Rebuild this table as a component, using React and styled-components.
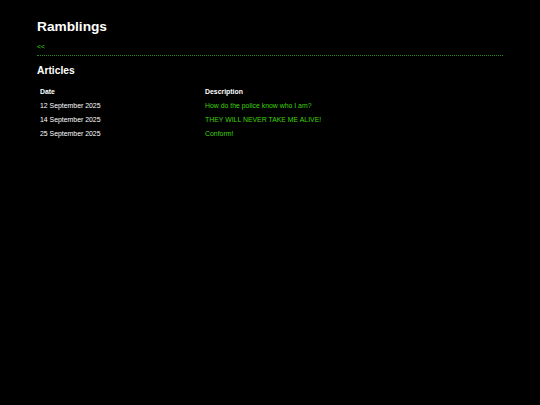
import React from 'react';
import styled, { createGlobalStyle } from 'styled-components';

const GlobalStyle = createGlobalStyle`
  html, body {
    margin: 0;
    background-color: #000000;
  }
  body {
    font-family: "Liberation Sans", Arial, sans-serif;
    color: #ffffff;
  }
`;

const Page = styled.div`
  padding: 18px 37px 0 37px;
`;

const Title = styled.h1`
  margin: 0;
  font-size: 13.7px;
  font-weight: 700;
  line-height: 18px;
`;

const BackLink = styled.a`
  display: block;
  margin-top: 7px;
  color: #3fd40a;
  font-size: 6.8px;
  line-height: 8px;
  text-decoration: none;
`;

const Rule = styled.hr`
  margin: 4px 0 0 0;
  border: none;
  border-top: 1px dotted #238a1c;
`;

const Heading = styled.h2`
  margin: 8px 0 0 0;
  font-size: 10.3px;
  font-weight: 700;
  line-height: 14px;
`;

const Table = styled.table`
  width: 100%;
  margin-top: 6px;
  border-collapse: collapse;
  font-size: 6.9px;
`;

const HeadCell = styled.th`
  width: ${(p) => p.$width || 'auto'};
  padding: 0 3px;
  height: 14px;
  text-align: left;
  font-weight: 700;
`;

const Cell = styled.td`
  padding: 0 3px;
  height: 14px;
  color: ${(p) => (p.$link ? '#3fd40a' : '#ffffff')};
`;

const articles = [
  { date: '12 September 2025', title: 'How do the police know who I am?' },
  { date: '14 September 2025', title: 'THEY WILL NEVER TAKE ME ALIVE!' },
  { date: '25 September 2025', title: 'Conform!' },
];

const App = () => {
  return (
    <>
      <GlobalStyle />
      <Page>
        <Title>Ramblings</Title>
        <BackLink href="#">&lt;&lt;</BackLink>
        <Rule />
        <Heading>Articles</Heading>
        <Table>
          <thead>
            <tr>
              <HeadCell $width="159px">Date</HeadCell>
              <HeadCell>Description</HeadCell>
            </tr>
          </thead>
          <tbody>
            {articles.map((a) => (
              <tr key={a.date}>
                <Cell>{a.date}</Cell>
                <Cell $link>{a.title}</Cell>
              </tr>
            ))}
          </tbody>
        </Table>
      </Page>
    </>
  );
};

export default App;
